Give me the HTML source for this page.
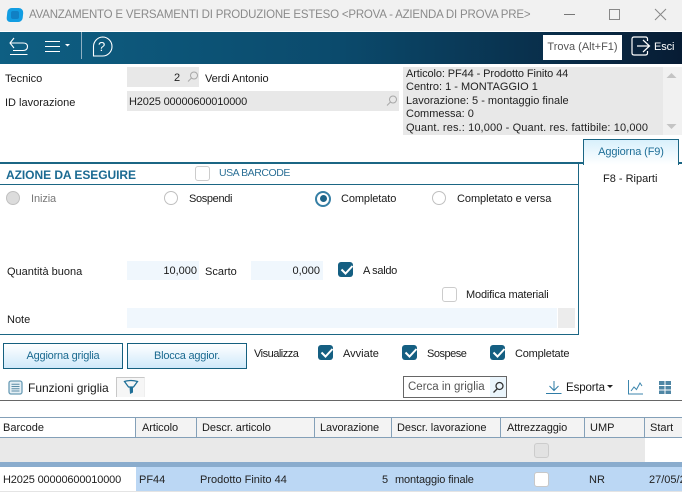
<!DOCTYPE html>
<html><head><meta charset="utf-8"><style>
html,body{margin:0;padding:0;background:#fff}
#p{position:relative;width:682px;height:495px;overflow:hidden;background:#fff;font:11px "Liberation Sans",sans-serif;color:#1a1a1a}
#p div,#p span,#p svg{position:absolute}
.t{white-space:nowrap;line-height:14px;margin-top:1px}
.r{width:12px;height:12px;border:1px solid #c0c0c0;border-radius:50%;background:#fff}
.c{width:13px;height:13px;border:1px solid #ccc;border-radius:3px;background:#fff}
.k{width:15px;height:15px;border-radius:3px;background:#155f82}
.th{top:418px;height:19px;border-right:1px solid #84a0b8;background:#f3f3f3}
.btn{top:343px;height:24px;width:118px;border:1px solid #15607f;background:linear-gradient(#fff,#cfe9fa);color:#1b6a90;text-align:center;line-height:25px;letter-spacing:-.22px}
b{font-weight:normal}
</style></head><body><div id="p">

<div style="left:0;top:0;width:682px;height:31px;background:#f1f1f1"></div>
<div style="left:7px;top:8px;width:16px;height:14px;background:#129de2;border-radius:4px 5px 4px 4px;transform:skewX(-6deg)"></div>
<div style="left:11px;top:11px;width:8px;height:8px;background:#1080c4;border-radius:2px"></div>
<span class="t" style="left:29px;top:6px;font-size:11.5px;color:#8a8a8a;line-height:16px;letter-spacing:-.2px">AVANZAMENTO E VERSAMENTI DI PRODUZIONE ESTESO &lt;PROVA - AZIENDA DI PROVA PRE&gt;</span>
<svg style="left:560px;top:8px" width="110" height="16" fill="none" stroke="#777" stroke-width="1"><path d="M4 6.500H15"/><rect x="49.500" y="1.500" width="10" height="10" stroke="#888"/><path d="M95 1l11 11M106 1L95 12" stroke="#888"/></svg>

<div style="left:0;top:32px;width:682px;height:32px;background:linear-gradient(90deg,#0e5f83 0%,#0b4a6c 50%,#071c34 100%)"></div>
<svg style="left:0;top:32px" width="125" height="32" fill="none" stroke="#fff" stroke-width="1.100"><path d="M14 6L10 11L14 16M10.500 11H23Q27.500 11 27.500 14.500Q27.500 18.500 23 18.500H13"/><path d="M10 22.500H27.500" stroke-width="1"/><path d="M45 9.500H60M45 14.500H60M45 19.500H60"/><path d="M65 12h5l-2.500 2.500z" fill="#fff" stroke="none"/><path d="M81.500 0V27" stroke="#8fb0c2" stroke-width="1"/><path d="M102.500 5a9.500 9.500 0 0 1 0 19H93.500V14.500a9.500 9.500 0 0 1 9-9.500z"/></svg>
<span style="left:98px;top:39px;font-size:13px;color:#fff;line-height:15px;white-space:nowrap">?</span>
<div style="white-space:nowrap;left:543px;top:35px;width:79px;height:25px;background:#fff;line-height:25px;text-align:center;color:#555;font-size:11px">Trova (Alt+F1)</div>
<svg style="left:630px;top:36px" width="24" height="22" fill="none" stroke="#fff" stroke-width="1.200"><path d="M17.500 5V3Q17.500 1 15.500 1H4Q2 1 2 3V17Q2 19 4 19H15.500Q17.500 19 17.500 17V15"/><path d="M7 10H19M13 4L19.500 10L13 16"/></svg>
<span class="t" style="left:654px;top:39px;color:#fff;letter-spacing:-.1px">Esci</span>

<span class="t" style="left:5px;top:71px">Tecnico</span>
<div style="left:127px;top:67px;width:72px;height:20px;background:#e8e8e8"></div>
<span class="t" style="left:174px;top:70px;color:#222">2</span>
<svg style="left:187px;top:71px" width="12" height="12" fill="none" stroke="#a8a8a8"><circle cx="7" cy="4.500" r="3.500"/><path d="M4.500 7L1 10.500"/></svg>
<span class="t" style="left:205px;top:71px;letter-spacing:-.1px">Verdi Antonio</span>
<span class="t" style="left:5px;top:95px">ID lavorazione</span>
<div style="left:127px;top:91px;width:272px;height:20px;background:#e8e8e8"></div>
<span class="t" style="left:129px;top:94px;color:#222;letter-spacing:-.15px">H2025 00000600010000</span>
<svg style="left:386px;top:95px" width="12" height="12" fill="none" stroke="#a8a8a8"><circle cx="7" cy="4.500" r="3.500"/><path d="M4.500 7L1 10.500"/></svg>

<div style="left:403px;top:67px;width:260px;height:68px;background:#e8e8e8"></div>
<div style="left:663px;top:67px;width:19px;height:68px;background:#f1f1f1"></div>
<svg style="left:665px;top:72px" width="14" height="58" fill="#c4c4c4"><path d="M1.500 6L6.500 1L11.500 6z"/><path d="M1.500 52L6.500 57L11.500 52z"/></svg>
<span class="t" style="left:406px;top:67px;color:#222;font-size:11px;line-height:13.400px"><b style="letter-spacing:-.1px">Articolo: PF44 - Prodotto Finito 44</b><br><b>Centro: 1 - MONTAGGIO 1</b><br><b>Lavorazione: 5 - montaggio finale</b><br><b>Commessa: 0</b><br><b style="letter-spacing:.12px">Quant. res.: 10,000 - Quant. res. fattibile: 10,000</b></span>

<div style="left:0;top:162px;width:583px;height:2px;background:#1b6684"></div>
<div style="left:678px;top:162px;width:4px;height:2px;background:#1b6684"></div>
<div style="left:0;top:184px;width:579px;height:1px;background:#1b6684"></div>
<div style="left:578px;top:163px;width:1px;height:172px;background:#1b6684"></div>
<div style="left:0;top:334px;width:579px;height:1px;background:#1b6684"></div>
<span class="t" style="left:6px;top:167px;font-size:12px;font-weight:bold;color:#1b6a92;letter-spacing:-.05px">AZIONE DA ESEGUIRE</span>
<div class="c" style="left:195px;top:166px"></div>
<span class="t" style="left:219px;top:165px;color:#2c7096;font-size:10.500px;letter-spacing:-.45px">USA BARCODE</span>

<div style="left:583px;top:139px;width:94px;height:25px;border:1px solid #1b6684;border-bottom:0;background:linear-gradient(#d8f0fc,#fff);color:#1f6f97;line-height:25px;text-align:center;font-size:11px;letter-spacing:-.12px">Aggiorna (F9)</div>
<span class="t" style="left:603px;top:171px">F8 - Riparti</span>

<div class="r" style="left:6px;top:191px;background:#dcdcdc"></div>
<span class="t" style="left:31px;top:191px;color:#777;letter-spacing:-.1px">Inizia</span>
<div class="r" style="left:164px;top:191px"></div>
<span class="t" style="left:189px;top:191px;letter-spacing:-.35px">Sospendi</span>
<div class="r" style="left:315px;top:191px;border:2px solid #367fa5"></div>
<div style="left:319.500px;top:195px;width:7px;height:7px;border-radius:50%;background:#1c6388"></div>
<span class="t" style="left:341px;top:191px;letter-spacing:-.1px">Completato</span>
<div class="r" style="left:432px;top:191px"></div>
<span class="t" style="left:457px;top:191px;letter-spacing:-.06px">Completato e versa</span>

<span class="t" style="left:7px;top:264px">Quantità buona</span>
<div style="left:127px;top:261px;width:72px;height:19px;background:#f0f7fd"></div>
<span class="t" style="left:127px;top:263px;width:70px;text-align:right">10,000</span>
<span class="t" style="left:205px;top:264px">Scarto</span>
<div style="left:251px;top:261px;width:72px;height:19px;background:#f0f7fd"></div>
<span class="t" style="left:251px;top:263px;width:69px;text-align:right">0,000</span>
<div class="k" style="left:338px;top:262px"></div>
<span class="t" style="left:363px;top:263px;letter-spacing:-.3px">A saldo</span>
<div class="c" style="left:442px;top:287px"></div>
<span class="t" style="left:466px;top:287px;letter-spacing:-.17px">Modifica materiali</span>
<span class="t" style="left:7px;top:312px">Note</span>
<div style="left:127px;top:308px;width:430px;height:20px;background:#f0f7fd"></div>
<div style="left:558px;top:308px;width:17px;height:20px;background:#ececec"></div>

<div class="btn" style="left:3px">Aggiorna griglia</div>
<div class="btn" style="left:127px">Blocca aggior.</div>
<span class="t" style="left:254px;top:346px;letter-spacing:-.5px">Visualizza</span>
<div class="k" style="left:318px;top:345px"></div>
<span class="t" style="left:343px;top:346px">Avviate</span>
<div class="k" style="left:402px;top:345px"></div>
<span class="t" style="left:427px;top:346px;letter-spacing:-.5px">Sospese</span>
<div class="k" style="left:490px;top:345px"></div>
<span class="t" style="left:515px;top:346px;letter-spacing:-.2px">Completate</span>
<svg style="left:0;top:0;pointer-events:none" width="682" height="495" fill="none" stroke="#fff" stroke-width="2"><path d="M341.500 269.500l4 4l7-7.500"/><path d="M321.500 352.500l4 4l7-7.500"/><path d="M405.500 352.500l4 4l7-7.500"/><path d="M493.500 352.500l4 4l7-7.500"/></svg>

<svg style="left:8px;top:380px" width="15" height="15" fill="none" stroke="#6a9cb5" stroke-width="1.300"><rect x="1" y="1" width="13" height="13" rx="2" fill="#e4eff5"/><path d="M3.500 4.200h8M3.500 6.500h8M3.500 8.800h8M3.500 11h8" stroke="#5a8ba5" stroke-width="1"/></svg>
<span class="t" style="left:28px;top:380px;font-size:12px">Funzioni griglia</span>
<div style="left:116px;top:377px;width:29px;height:20px;border:1px solid #c8c8c8;border-bottom:0;border-right-color:#eee;box-sizing:border-box;background:#f6f6f6"></div>
<svg style="left:123px;top:379px" width="17" height="17" fill="none" stroke="#1f6f97" stroke-width="1.300"><path d="M1.500 2.500Q8 .5 14.500 2.500L10.500 8H5.500z"/><path d="M6.500 7.500H10V13.500L7 15z" fill="#1f6f97" stroke="none"/></svg>
<div style="left:403px;top:376px;width:102px;height:20px;border:1px solid #666;background:#fff"></div>
<span class="t" style="left:408px;top:379px;color:#555;font-size:11.500px">Cerca in griglia</span>
<div style="left:490px;top:377px;width:16px;height:20px;background:#eaf5fc"></div>
<svg style="left:492px;top:381px" width="13" height="13" fill="none" stroke="#333" stroke-width="1.300"><circle cx="7.500" cy="5" r="3.500"/><path d="M5 8L1.500 11.500"/></svg>
<svg style="left:546px;top:380px" width="16" height="15" fill="none" stroke="#2f7ca6"><path d="M8 1V10M3.500 6L8 10.500L12.500 6M0 13.500H15.500"/></svg>
<span class="t" style="left:566px;top:380px;font-size:11.500px;letter-spacing:-.1px">Esporta</span>
<svg style="left:607px;top:385px" width="7" height="4"><path d="M0 0h6L3 3z" fill="#222"/></svg>
<svg style="left:627px;top:380px" width="16" height="15" fill="none" stroke="#3c86ad"><path d="M1.500 0V14H16"/><path d="M4 11L7 7L9.500 9.500L13 3L15 6"/></svg>
<svg style="left:659px;top:380px" width="13" height="15" fill="#4f86a4"><rect y="1" width="5.500" height="4"/><rect x="6.500" y="1" width="5.500" height="4"/><rect y="6" width="5.500" height="3.500"/><rect x="6.500" y="6" width="5.500" height="3.500"/><rect y="10.500" width="5.500" height="3.500"/><rect x="6.500" y="10.500" width="5.500" height="3.500"/></svg>

<div style="left:0;top:400px;width:682px;height:1px;background:#666"></div>

<div style="left:0;top:417px;width:682px;height:1px;background:#84a0b8"></div>
<div style="left:0;top:437px;width:682px;height:1px;background:#84a0b8"></div>
<div class="th" style="left:0;width:135px;background:#fff"></div>
<div class="th" style="left:136px;width:60px"></div>
<div class="th" style="left:197px;width:117px"></div>
<div class="th" style="left:315px;width:76px"></div>
<div class="th" style="left:392px;width:108px"></div>
<div class="th" style="left:501px;width:83px"></div>
<div class="th" style="left:585px;width:59px"></div>
<div class="th" style="left:645px;width:37px;border-right:0"></div>
<span class="t" style="left:3px;top:420px">Barcode</span>
<span class="t" style="left:142px;top:420px;letter-spacing:-.08px">Articolo</span>
<span class="t" style="left:202px;top:420px;letter-spacing:-.06px">Descr. articolo</span>
<span class="t" style="left:320px;top:420px;letter-spacing:-.08px">Lavorazione</span>
<span class="t" style="left:397px;top:420px;letter-spacing:-.06px">Descr. lavorazione</span>
<span class="t" style="left:507px;top:420px;letter-spacing:-.08px">Attrezzaggio</span>
<span class="t" style="left:590px;top:420px">UMP</span>
<span class="t" style="left:650px;top:420px">Start</span>

<div style="left:0;top:438px;width:645px;height:24px;background:#e9e9e9"></div>
<div class="c" style="left:534px;top:443px;background:#e2e2e2"></div>
<div style="left:0;top:462px;width:682px;height:5px;background:#8aaccd"></div>
<div style="left:136px;top:467px;width:546px;height:24px;background:#bbd7f4"></div>
<div style="left:0;top:491px;width:682px;height:1px;background:#e4e4e4"></div>
<span class="t" style="left:3px;top:472px;color:#222;letter-spacing:-.15px">H2025 00000600010000</span>
<span class="t" style="left:139px;top:472px;color:#222">PF44</span>
<span class="t" style="left:200px;top:472px;color:#222">Prodotto Finito 44</span>
<span class="t" style="left:382px;top:472px;color:#222">5</span>
<span class="t" style="left:395px;top:472px;color:#222;letter-spacing:-.12px">montaggio finale</span>
<div class="c" style="left:534px;top:472px;border-color:#c8c8c8"></div>
<span class="t" style="left:589px;top:472px;color:#222">NR</span>
<span class="t" style="left:649px;top:472px;color:#222">27/05/2025</span>
</div></body></html>
